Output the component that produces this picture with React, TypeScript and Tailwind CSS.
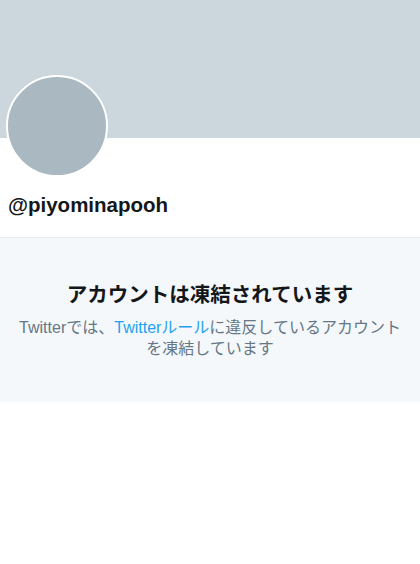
export default function App() {
  return (
    <div
      className="min-h-[564px] w-full bg-white"
      style={{ fontFamily: '"Liberation Sans", Arial, "Noto Sans CJK JP", sans-serif' }}
    >
      <div className="h-[138px] w-full bg-[#ccd6dd]" />

      <div className="px-[6px]">
        <div className="-mt-[63px] h-[102px] w-[102px] rounded-full border-2 border-white bg-[#aab8c2]" />
      </div>

      <div className="px-2 pt-[16px] pb-[20px]">
        <h1 className="text-[20.5px] font-bold leading-6 text-[#14171a]">@piyominapooh</h1>
      </div>

      <div className="border-t border-[#e6ecf0] bg-[#f5f8fa] px-4 pt-[44px] pb-[43px] text-center">
        <h2 className="text-[20.5px] font-bold leading-[26px] text-[#14171a]">
          アカウントは凍結されています
        </h2>
        <p className="mt-[9px] text-[16px] leading-[21px] text-[#657786]">
          Twitterでは、<span className="text-[#1da1f2]">Twitterルール</span>に違反しているアカウントを凍結しています
        </p>
      </div>
    </div>
  );
}
